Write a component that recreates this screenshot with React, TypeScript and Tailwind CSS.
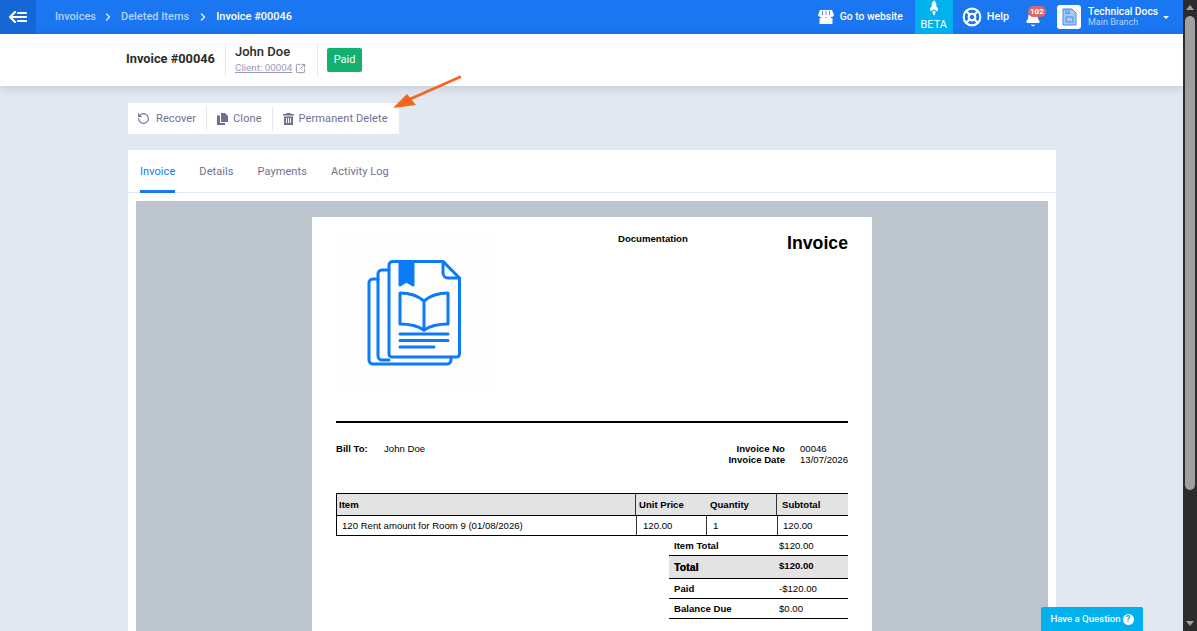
import React from 'react';
import { ChevronRight, Bell, SquareArrowOutUpRight, RotateCcw, LifeBuoy, Rocket } from 'lucide-react';

const roboto = "font-['Roboto',sans-serif]";
const arial = "font-['Liberation_Sans',Arial,sans-serif]";

const BookLogo = () => (
  <svg width="96" height="106" viewBox="0 0 96 106" fill="none" stroke="#0b7bf8" strokeWidth="3" strokeLinejoin="round" strokeLinecap="round">
    <path d="M11 19H6a4 4 0 0 0-4 4v77a4 4 0 0 0 4 4h74a4 4 0 0 0 4-4v-3" />
    <path d="M22 10h-7a4 4 0 0 0-4 4v82a4 4 0 0 0 4 4h7" />
    <path d="M25 1.400h51L92.500 18v76a3 3 0 0 1-3 3H25a3 3 0 0 1-3-3V5a4 4 0 0 1 4-3.600z" />
    <path d="M76 2v11a5 5 0 0 0 5 5h11" />
    <path d="M33 1.500h13V25l-6.500-4-6.500 4z" fill="#0b7bf8" />
    <path d="M33 33c9 0 17 2 24 8 7-6 15-8 24-8v31c-9 0-18 2-24 6-6-4-15-6-24-6z" />
    <path d="M57 41v29" />
    <path d="M33 74h48M33 80.500h48M33 87h34" />
  </svg>
);

const CloneIcon = () => (
  <svg width="11" height="12" viewBox="0 0 11 12" fill="#6f6f92">
    <path d="M4 0h4l3 3v6H4z" />
    <path d="M0 2.500h3V10h5v2H0z" />
  </svg>
);

const TrashIcon = () => (
  <svg width="11" height="12" viewBox="0 0 11 12" fill="#6f6f92">
    <path d="M3.500 0h4v1H11v1.500H0V1h3.500z" />
    <path fillRule="evenodd" d="M1 3.500h9V12H1zM3 5v5h1V5zm2 0v5h1V5zm2 0v5h1V5z" />
  </svg>
);

const StoreIcon = () => (
  <svg width="16" height="14" viewBox="0 0 16 14" fill="white">
    <path d="M2 0h12l2 5a2 2 0 0 1-2.700 1.700A2.700 2.700 0 0 1 8 6.700a2.700 2.700 0 0 1-5.300 0A2 2 0 0 1 0 5z" />
    <path d="M1.500 8h13v6h-13z" />
    <path d="M4.500 1v4M8 1v4M11.500 1v4" stroke="#1a76f1" strokeWidth="0.800" />
  </svg>
);

const ActionButton = ({ icon, label, iconClass }: { icon: React.ReactNode; label: string; iconClass: string }) => (
  <div className="flex items-center h-[25px] pl-[10px] pr-[10px] border-l border-[#e3e8f0] first:border-l-0 text-[#6f6f92] text-[11px] tracking-[0.1px] whitespace-nowrap">
    <span className={`flex items-center ${iconClass}`}>{icon}</span>
    <span className="pt-[1px]">{label}</span>
  </div>
);

const Tab = ({ label, active }: { label: string; active?: boolean }) => (
  <div className={`h-[43px] pt-[5px] flex items-center text-[11px] tracking-[0.07px] border-b-[3px] ${active ? 'border-[#1a76f1] text-[#1a76f1]' : 'border-transparent text-[#6f6f92]'}`}>
    {label}
  </div>
);

const TotalRow = ({ label, value, bold, shaded, height }: { label: string; value: string; bold?: boolean; shaded?: boolean; height: string }) => (
  <div className={`flex items-center border-b border-black pl-[5px] pt-[1px] ${height} ${shaded ? 'bg-[#e3e3e3]' : ''}`}>
    <span className={`w-[105px] font-bold ${bold ? 'text-[10px] tracking-[0.3px] [text-shadow:0.4px_0_0_black]' : ''}`}>{label}</span>
    <span className={bold ? 'font-bold -mt-[3px]' : ''}>{value}</span>
  </div>
);

export default function App() {
  return (
    <div className={`flex h-[631px] w-[1197px] overflow-hidden bg-[#e2e8f1] ${roboto}`}>
      <div className="relative flex-1 min-w-0 flex flex-col">
        <header className="h-[34px] shrink-0 bg-[#1a76f1] flex items-center text-white">
          <div className="w-[36px] h-full bg-[#1567d6] flex items-center justify-center">
            <svg width="18" height="12" viewBox="0 0 18 12" fill="none" stroke="white" strokeWidth="2.200" strokeLinecap="round" strokeLinejoin="round">
              <path d="M6 1 1 6l5 5M1 6h16M9 2h8M9 10h8" />
            </svg>
          </div>
          <nav className="ml-[19px] flex items-center text-[11px] font-medium">
            <span className="text-[#b5d2fa]">Invoices</span>
            <ChevronRight size={12} strokeWidth={3} className="mx-[6.5px] text-[#dbe9fd]" />
            <span className="text-[#b5d2fa]">Deleted Items</span>
            <ChevronRight size={12} strokeWidth={3} className="mx-[7.5px] text-[#e7f0fe]" />
            <span>Invoice #00046</span>
          </nav>
          <div className="ml-auto flex items-center h-full">
            <span className="mr-[6px]"><StoreIcon /></span>
            <span className="text-[10.3px] font-medium mr-[12px]">Go to website</span>
            <div className="w-[38px] h-full bg-[#00b1ee] flex flex-col items-center justify-between pb-[3px]">
              <Rocket size={12} fill="white" className="-rotate-45 mt-[2px]" />
              <span className="text-[11px] leading-[12px]">BETA</span>
            </div>
            <LifeBuoy size={20} strokeWidth={2.5} className="ml-[9px] mr-[5px]" />
            <span className="text-[10.8px] font-medium mr-[16px]">Help</span>
            <div className="relative mr-[16px]">
              <Bell size={16} fill="white" className="mt-[4px]" />
              <span className="absolute -top-[1px] left-[3px] h-[11px] px-[2px] rounded-full bg-[#d9686f] text-[8px] leading-[11px] font-bold">102</span>
            </div>
            <div className="w-[24px] h-[24px] bg-white rounded-[3px] flex items-center justify-center mr-[7px]">
              <svg width="16" height="18" viewBox="0 0 16 18" fill="#a8c8f5" stroke="#3f8bf0" strokeWidth="1">
                <path d="M2 1h9l4 4v12H2z" />
                <path d="M5 1v5l1.500-1L8 6V1M5 9h7v5H5z" fill="none" />
              </svg>
            </div>
            <div className="flex flex-col w-[75px] leading-[11.5px]">
              <span className="text-[10.3px] font-medium whitespace-nowrap">Technical Docs</span>
              <span className="text-[9px] text-[#b5d2fa] whitespace-nowrap">Main Branch</span>
            </div>
            <div className="mr-[14px] w-0 h-0 border-x-[3px] border-x-transparent border-t-[3px] border-t-white" />
          </div>
        </header>

        <div className="h-[52px] shrink-0 bg-white shadow-[0_2px_8px_rgba(40,60,90,0.18)] flex items-center pl-[126px] z-10">
          <span className="w-[99px] text-[12.8px] font-bold text-[#2b2b2b] -mt-[2px]">Invoice #00046</span>
          <div className="w-[92px] h-[32px] border-l border-[#e3e8f0] pl-[9px] flex flex-col justify-center gap-[1px]">
            <span className="text-[13px] font-medium text-[#2b2b2b] leading-[16px] -mt-[1px]">John Doe</span>
            <span className="flex items-center gap-[3px] text-[9.8px] text-[#9a9abb] leading-[14px]">
              <span className="underline">Client: 00004</span>
              <SquareArrowOutUpRight size={11} className="text-[#8c8c9e]" />
            </span>
          </div>
          <div className="h-[32px] border-l border-[#e3e8f0] pl-[9px] flex items-center">
            <span className="h-[24px] w-[35px] flex items-center justify-center rounded-[2px] bg-[#13b070] text-white text-[11px]">Paid</span>
          </div>
        </div>

        <div className="flex-1 min-h-0 pl-[128px] pr-[127px] pt-[17px] flex flex-col items-start">
          <div className="h-[31px] w-[271px] bg-white flex items-center">
            <ActionButton icon={<RotateCcw size={13} strokeWidth={2} />} iconClass="-ml-[1px] mr-[6px]" label="Recover" />
            <ActionButton icon={<CloneIcon />} iconClass="mr-[5px]" label="Clone" />
            <ActionButton icon={<TrashIcon />} iconClass="mr-[5px]" label="Permanent Delete" />
          </div>

          <div className="mt-[16px] w-[928px] flex-1 bg-white flex flex-col min-h-0">
            <div className="h-[43px] shrink-0 border-b border-[#e2e8f1] px-[12px] flex gap-[24px]">
              <Tab label="Invoice" active />
              <Tab label="Details" />
              <Tab label="Payments" />
              <Tab label="Activity Log" />
            </div>
            <div className="mx-[8px] mt-[8px] flex-1 min-h-0 bg-[#bcc4ce] pt-[16px] flex justify-center overflow-hidden">
              <div className={`w-[560px] h-[500px] shrink-0 bg-white px-[24px] pt-[16px] text-[9.6px] text-black ${arial}`}>
                <div className="flex h-[190px] border-b-2 border-black">
                  <div className="w-[160px] h-[160px] bg-[#fdfdfd] flex items-start pl-[31px] pt-[27px]">
                    <BookLogo />
                  </div>
                  <span className="ml-[122px] font-bold leading-[11px]">Documentation</span>
                  <span className="ml-auto font-bold text-[17.7px] leading-[20px]">Invoice</span>
                </div>

                <div className="flex justify-between mt-[20px] h-[50px] leading-[11px]">
                  <div className="flex">
                    <span className="w-[48px] font-bold">Bill To:</span>
                    <span>John Doe</span>
                  </div>
                  <div className="flex">
                    <div className="flex flex-col items-end font-bold">
                      <span>Invoice No</span>
                      <span>Invoice Date</span>
                    </div>
                    <div className="flex flex-col ml-[15px]">
                      <span>00046</span>
                      <span>13/07/2026</span>
                    </div>
                  </div>
                </div>

                <div className="border-t border-black">
                  <div className="flex h-[22px] items-center bg-[#e3e3e3] border-b border-black font-bold border-l border-l-black">
                    <span className="w-[299px] h-full flex items-center pl-[2px] pt-[1px] border-r border-[#333]">Item</span>
                    <span className="w-[70px] h-full flex items-center pl-[3px] pt-[1px]">Unit Price</span>
                    <span className="w-[71px] h-full flex items-center pl-[4px] pt-[1px] border-r border-[#333]">Quantity</span>
                    <span className="flex-1 h-full flex items-center pl-[5px] pt-[1px]">Subtotal</span>
                  </div>
                  <div className="flex h-[20px] items-center border-b border-black border-l border-l-black">
                    <span className="w-[300px] h-full flex items-center pl-[5px] pt-[1px] border-r border-[#333]">120 Rent amount for Room 9 (01/08/2026)</span>
                    <span className="w-[70px] h-full flex items-center pl-[6px] pt-[1px] border-r border-[#333]">120.00</span>
                    <span className="w-[71px] h-full flex items-center pl-[6px] pt-[1px] border-r border-[#333]">1</span>
                    <span className="flex-1 h-full flex items-center pl-[5px] pt-[1px]">120.00</span>
                  </div>
                </div>

                <div className="ml-[333px]">
                  <TotalRow label="Item Total" value="$120.00" height="h-[20px]" />
                  <TotalRow label="Total" value="$120.00" bold shaded height="h-[23px]" />
                  <TotalRow label="Paid" value="-$120.00" height="h-[20px]" />
                  <TotalRow label="Balance Due" value="$0.00" height="h-[20px]" />
                </div>
              </div>
            </div>
          </div>
        </div>

        {/* orange annotation arrow over the action bar */}
        <svg className="absolute left-[390px] top-[72px] z-20" width="75" height="38" viewBox="0 0 75 38" fill="none">
          <path d="M70 5 18 28" stroke="#f4661b" strokeWidth="2.500" strokeLinecap="round" />
          <path d="M3 36 17 22l9 11z" fill="#f4661b" />
        </svg>

        <div className="absolute left-[1041px] top-[607px] w-[102px] h-[24px] bg-[#00b1ee] rounded-t-[2px] flex items-center justify-center gap-[2px] text-white text-[9.6px] font-medium">
          <span>Have a Question</span>
          <span className="w-[11px] h-[11px] rounded-full bg-white text-[#00b1ee] text-[9px] leading-[11px] font-bold text-center">?</span>
        </div>
      </div>

      <div className="w-[14px] shrink-0 bg-[#2c2c2c] flex flex-col items-center justify-between">
        <div className="flex flex-col items-center w-full">
          <div className="mt-[5px] w-0 h-0 border-x-[4px] border-x-transparent border-b-[5px] border-b-[#a0a0a0]" />
          <div className="mt-[6px] w-[10px] h-[474px] rounded-[5px] bg-[#a0a0a0]" />
        </div>
        <div className="mb-[5px] w-0 h-0 border-x-[4px] border-x-transparent border-t-[5px] border-t-[#a0a0a0]" />
      </div>
    </div>
  );
}
